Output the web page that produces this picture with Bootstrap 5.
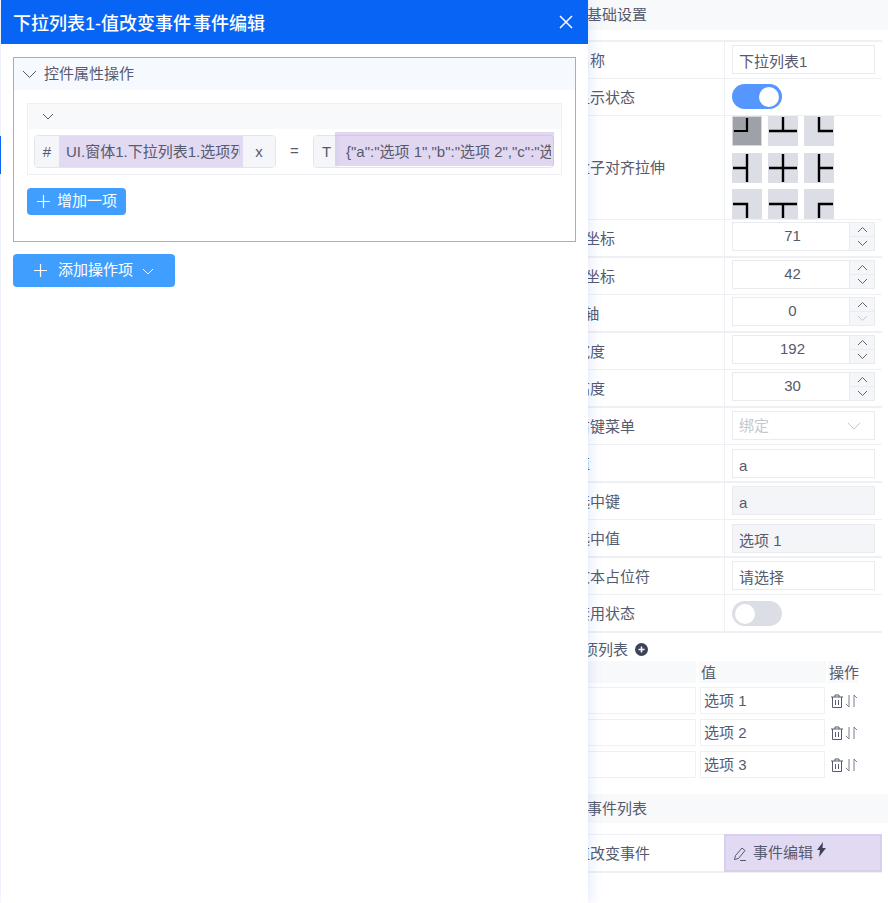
<!DOCTYPE html>
<html lang="zh">
<head>
<meta charset="utf-8">
<title>事件编辑</title>
<link href="https://cdn.jsdelivr.net/npm/bootstrap@5.3.0/dist/css/bootstrap.min.css" rel="stylesheet">
<style>
html,body{margin:0;height:903px;overflow:hidden;background:#fff}
body{font-family:"Liberation Sans","Noto Sans CJK SC",sans-serif;font-size:15px;color:#555a6e;position:relative}
.edge-mark{position:absolute;left:0;top:136px;width:1px;height:38px;background:#0764f5}
.prop-panel{margin-left:auto;width:348px}
.sec-head{height:30px;background:#f8f9fa;padding-left:47px;line-height:30px}
.prop-table{margin:10px 6px 0 0;border-top:2px solid #eff0f3}
.prop-row{display:flex;height:37px;border-bottom:1px solid #eff0f3;align-items:center}
.prop-row.thick{height:38px;border-bottom-width:2px}
.prop-row.tall{height:104px}
.prop-label{width:184px;flex:none;padding:2px 0 0 35px;white-space:nowrap}
.prop-val{flex:1;height:100%;border-left:1px solid #eff0f3;padding:0 7px;display:flex;align-items:flex-start}
.fake-input{width:143px;height:29px;margin-top:3px;border:1px solid #e9ebef;padding:3px 6px 0;line-height:26px;background:#fff}
.thick .fake-input{margin-top:4px}
.fake-input.ro{background:#f4f5f9}
.fake-input.muted{color:#c4c7d0;display:flex;justify-content:space-between;align-items:center;padding:0 13px 0 6px}
.num-wrap{width:143px;height:29px;margin-top:2px;border:1px solid #e9ebef;display:flex}
.num-val{flex:1;text-align:center;line-height:25px;padding-left:3px}
.num-btns{width:25px;border-left:1px solid #e9ebef;background:#f5f6fa;display:flex;flex-direction:column}
.num-btns span{flex:1;display:flex;align-items:center;justify-content:center;height:50%}
.num-btns span+span{border-top:1px solid #e9ebef}
.sw{width:50px;height:25px;margin-top:5px;border-radius:13px;background:#5596ff;display:flex;align-items:center;justify-content:flex-end;padding:0 3px}
.sw.off{background:#dcdee6;justify-content:flex-start;margin-top:6px}
.sw i{display:block;width:20px;height:20px;border-radius:50%;background:#fff}
.align-grid{display:grid;grid-template-columns:repeat(3,30px);gap:6.5px 6px;height:103px;overflow:hidden;align-content:start}
.align-cell{width:30px;height:30px;background:#dcdee6;display:block}
.align-cell.on{background:#9fa1a8;border:1px solid #d6d8de}
.opt-title{height:28px;padding:5px 0 0 28px;display:flex;align-items:center;gap:7px;white-space:nowrap}
.opt-title span{padding-top:2px}
.opt-head{display:flex;height:22px;line-height:22px}
.opt-head div{background:#f8f9fa;padding-top:1px;white-space:nowrap}
.c1{width:156px;flex:none}
.opt-head .c2{width:127px;flex:none;margin-left:3px;padding-left:2px}
.opt-head .c3{width:30px;flex:none;margin-left:2px;padding-left:1px}
.opt-row{display:flex;gap:4px;height:27px;margin-top:5px}
.first-opt{margin-top:4px}
.opt-cell{border:1px solid #eff0f3;height:27px;line-height:25px;padding-left:3px}
.opt-row .c2{width:125px;flex:none;padding-left:3px}
.opt-ops{display:flex;align-items:center;gap:2px;padding-left:2px}
.ev-head{margin-top:16px;height:29px;line-height:29px;background:#f8f9fa;padding-left:47px}
.ev-row{display:flex;height:39px;margin:11px 6px 0 0;border-top:1px solid #eff0f3;border-bottom:2px solid #eff0f3;align-items:center}
.ev-name{width:184px;flex:none;padding:2px 0 0 35px;white-space:nowrap}
.ev-edit{flex:1;align-self:stretch;margin:-1px 0;background:#e2d9f3;border:2px solid #d9cfec;display:flex;align-items:center;padding-left:7px;gap:6px}
.ev-edit svg.bolt{margin:-8px 0 0 -2px}
.side-drawer{position:absolute;left:1px;top:0;width:587px;height:903px;background:#fff;box-shadow:0 0 14px rgba(70,110,230,.2)}
.drawer-top{height:44px;background:#0764f5;color:#fff;font-size:18px;font-weight:500;word-spacing:-3px;line-height:44px;padding:4px 15px 0 12px;display:flex;justify-content:space-between;align-items:center}
.drawer-top svg{margin-top:-4px}
.drawer-body{padding:13px 12px}
.act-box{border:1px solid #d9a272;height:185px}
.act-box-head{height:32px;background:#f6f9fe;display:flex;align-items:center;padding:1px 0 0 8px;gap:7px}
.inner-box{margin:13px 13px 0;height:72px;border:1px solid #eff0f3}
.inner-head{height:25px;background:#f8f9fa;padding-left:14px;display:flex;align-items:center}
.expr-row{display:flex;align-items:center;padding:6px 0 0 6px;position:relative}
.expr-group{display:flex;height:33px;width:242px;border:1px solid #e3e5ec;border-radius:4px;overflow:hidden;line-height:31px}
.addon{background:#f5f6fa;text-align:center;flex:none}
.expr-main{background:#e2d9f3;flex:1;padding-left:7px;overflow:hidden;white-space:nowrap;border-right:3px solid #e2d9f3}
.eq{width:37px;text-align:center;flex:none}
.expr-group.wide{width:241px}
.expr-overlay{position:absolute;left:307px;top:3px;width:219px;height:34px;background:rgba(183,160,222,.42)}
.expr-overlay-text{position:absolute;left:318px;top:7px;width:205px;height:31px;line-height:31px;overflow:hidden;white-space:nowrap}
.blue-btn{background:#409eff;border:0;color:#fff;border-radius:4px;display:inline-flex;align-items:center;font-size:15px}
.btn-add{margin:13px 0 0 13px;width:99px;height:27px;padding:0 0 0 10px;gap:7px}
.btn-op{margin-top:12px;width:162px;height:33px;padding:0 0 0 21px;gap:11px;display:flex}
.btn-op .caret-ico{margin:2px 0 0 -2px}
</style>
</head>
<body>
<div class="edge-mark"></div>

<div class="prop-panel">
  <div class="sec-head">基础设置</div>
  <div class="prop-table">
    <div class="prop-row"><div class="prop-label">名称</div><div class="prop-val"><div class="fake-input">下拉列表1</div></div></div>
    <div class="prop-row"><div class="prop-label">显示状态</div><div class="prop-val"><div class="sw"><i></i></div></div></div>
    <div class="prop-row tall"><div class="prop-label">盒子对齐拉伸</div><div class="prop-val">
      <div class="align-grid">
        <svg class="align-cell on" viewBox="0 0 30 30"><path d="M1 15H15V1" fill="none" stroke="#000" stroke-width="2.4"/></svg>
        <svg class="align-cell" viewBox="0 0 30 30"><path d="M1 15H29M15 15V1" fill="none" stroke="#000" stroke-width="2.4"/></svg>
        <svg class="align-cell" viewBox="0 0 30 30"><path d="M15 1V15H29" fill="none" stroke="#000" stroke-width="2.4"/></svg>
        <svg class="align-cell" viewBox="0 0 30 30"><path d="M1 15H15M15 1V29" fill="none" stroke="#000" stroke-width="2.4"/></svg>
        <svg class="align-cell" viewBox="0 0 30 30"><path d="M1 15H29M15 1V29" fill="none" stroke="#000" stroke-width="2.4"/></svg>
        <svg class="align-cell" viewBox="0 0 30 30"><path d="M29 15H15M15 1V29" fill="none" stroke="#000" stroke-width="2.4"/></svg>
        <svg class="align-cell" viewBox="0 0 30 30"><path d="M1 15H15V29" fill="none" stroke="#000" stroke-width="2.4"/></svg>
        <svg class="align-cell" viewBox="0 0 30 30"><path d="M1 15H29M15 15V29" fill="none" stroke="#000" stroke-width="2.4"/></svg>
        <svg class="align-cell" viewBox="0 0 30 30"><path d="M29 15H15V29" fill="none" stroke="#000" stroke-width="2.4"/></svg>
      </div></div></div>
    <div class="prop-row thick"><div class="prop-label">X坐标</div><div class="prop-val"><div class="num-wrap"><div class="num-val">71</div><div class="num-btns"><span><svg width="11" height="7" viewBox="0 0 11 7"><path d="M1 6L5.5 1.5 10 6" fill="none" stroke="#666"/></svg></span><span><svg width="11" height="7" viewBox="0 0 11 7"><path d="M1 1L5.5 5.5 10 1" fill="none" stroke="#666"/></svg></span></div></div></div></div>
    <div class="prop-row"><div class="prop-label">Y坐标</div><div class="prop-val"><div class="num-wrap"><div class="num-val">42</div><div class="num-btns"><span><svg width="11" height="7" viewBox="0 0 11 7"><path d="M1 6L5.5 1.5 10 6" fill="none" stroke="#666"/></svg></span><span><svg width="11" height="7" viewBox="0 0 11 7"><path d="M1 1L5.5 5.5 10 1" fill="none" stroke="#666"/></svg></span></div></div></div></div>
    <div class="prop-row thick"><div class="prop-label">Z轴</div><div class="prop-val"><div class="num-wrap"><div class="num-val">0</div><div class="num-btns"><span><svg width="11" height="7" viewBox="0 0 11 7"><path d="M1 6L5.5 1.5 10 6" fill="none" stroke="#666"/></svg></span><span><svg width="11" height="7" viewBox="0 0 11 7"><path d="M1 1L5.5 5.5 10 1" fill="none" stroke="#c4c7d0"/></svg></span></div></div></div></div>
    <div class="prop-row"><div class="prop-label">宽度</div><div class="prop-val"><div class="num-wrap"><div class="num-val">192</div><div class="num-btns"><span><svg width="11" height="7" viewBox="0 0 11 7"><path d="M1 6L5.5 1.5 10 6" fill="none" stroke="#666"/></svg></span><span><svg width="11" height="7" viewBox="0 0 11 7"><path d="M1 1L5.5 5.5 10 1" fill="none" stroke="#666"/></svg></span></div></div></div></div>
    <div class="prop-row thick"><div class="prop-label">高度</div><div class="prop-val"><div class="num-wrap"><div class="num-val">30</div><div class="num-btns"><span><svg width="11" height="7" viewBox="0 0 11 7"><path d="M1 6L5.5 1.5 10 6" fill="none" stroke="#666"/></svg></span><span><svg width="11" height="7" viewBox="0 0 11 7"><path d="M1 1L5.5 5.5 10 1" fill="none" stroke="#666"/></svg></span></div></div></div></div>
    <div class="prop-row"><div class="prop-label">右键菜单</div><div class="prop-val"><div class="fake-input muted">绑定<svg width="14" height="8" viewBox="0 0 14 8"><path d="M1 1L7 7 13 1" fill="none" stroke="#c4c7d0"/></svg></div></div></div>
    <div class="prop-row thick"><div class="prop-label">值</div><div class="prop-val"><div class="fake-input">a</div></div></div>
    <div class="prop-row"><div class="prop-label">选中键</div><div class="prop-val"><div class="fake-input ro">a</div></div></div>
    <div class="prop-row thick"><div class="prop-label">选中值</div><div class="prop-val"><div class="fake-input ro">选项 1</div></div></div>
    <div class="prop-row"><div class="prop-label">文本占位符</div><div class="prop-val"><div class="fake-input">请选择</div></div></div>
    <div class="prop-row thick"><div class="prop-label">禁用状态</div><div class="prop-val"><div class="sw off"><i></i></div></div></div>
  </div>
  <div class="opt-title"><span>选项列表</span><svg width="13" height="13" viewBox="0 0 13 13"><circle cx="6.5" cy="6.5" r="6.5" fill="#3c4358"/><path d="M6.5 3.5v6M3.5 6.5h6" stroke="#fff" stroke-width="1.5"/></svg></div>
  <div class="opt-head"><div class="c1">键</div><div class="c2">值</div><div class="c3">操作</div></div>
  <div class="opt-row first-opt"><div class="c1 opt-cell">a</div><div class="c2 opt-cell">选项 1</div><div class="opt-ops"><svg width="12" height="14" viewBox="0 0 12 14"><path d="M0 3h12M4 3V1h4v2M1.5 3v10.5h9V3M4.5 6v5M7.5 6v5" fill="none" stroke="#555a6e"/></svg><svg width="13" height="14" viewBox="0 0 13 14"><path d="M4 1v12M1 10l3 3M9 13V1M9 1l3 3" fill="none" stroke="#7a7f90"/></svg></div></div>
  <div class="opt-row"><div class="c1 opt-cell">b</div><div class="c2 opt-cell">选项 2</div><div class="opt-ops"><svg width="12" height="14" viewBox="0 0 12 14"><path d="M0 3h12M4 3V1h4v2M1.5 3v10.5h9V3M4.5 6v5M7.5 6v5" fill="none" stroke="#555a6e"/></svg><svg width="13" height="14" viewBox="0 0 13 14"><path d="M4 1v12M1 10l3 3M9 13V1M9 1l3 3" fill="none" stroke="#7a7f90"/></svg></div></div>
  <div class="opt-row"><div class="c1 opt-cell">c</div><div class="c2 opt-cell">选项 3</div><div class="opt-ops"><svg width="12" height="14" viewBox="0 0 12 14"><path d="M0 3h12M4 3V1h4v2M1.5 3v10.5h9V3M4.5 6v5M7.5 6v5" fill="none" stroke="#555a6e"/></svg><svg width="13" height="14" viewBox="0 0 13 14"><path d="M4 1v12M1 10l3 3M9 13V1M9 1l3 3" fill="none" stroke="#7a7f90"/></svg></div></div>
  <div class="ev-head">事件列表</div>
  <div class="ev-row"><div class="ev-name">值改变事件</div>
    <div class="ev-edit"><svg width="14" height="15" viewBox="0 0 14 15"><path d="M1.5 13.5l1-4L9 2l3 2.5-6.5 8zM7 14.5h6" fill="none" stroke="#555a6e"/></svg><span>事件编辑</span><svg class="bolt" width="9" height="15" viewBox="0 0 9 15"><path d="M6 0L0 8h3l-1 7 7-9H5.5z" fill="#3c4358"/></svg></div>
  </div>
</div>

<div class="side-drawer">
  <div class="drawer-top"><span>下拉列表1-值改变事件 事件编辑</span><svg width="14" height="14" viewBox="0 0 14 14"><path d="M1 1l12 12M13 1L1 13" stroke="#fff" stroke-width="1.5"/></svg></div>
  <div class="drawer-body">
    <div class="act-box">
      <div class="act-box-head"><svg width="15" height="9" viewBox="0 0 15 9"><path d="M1 1l6.5 6.5L14 1" fill="none" stroke="#555a6e"/></svg><span>控件属性操作</span></div>
      <div class="inner-box">
        <div class="inner-head"><svg width="12" height="7" viewBox="0 0 12 7"><path d="M1 1l5 5 5-5" fill="none" stroke="#555a6e"/></svg></div>
        <div class="expr-row">
          <div class="expr-group"><div class="addon" style="width:24px">#</div><div class="expr-main">UI.窗体1.下拉列表1.选项列表</div><div class="addon" style="width:32px">x</div></div>
          <div class="eq">=</div>
          <div class="expr-group wide"><div class="addon" style="width:25px">T</div></div>
          <div class="expr-overlay"></div>
          <div class="expr-overlay-text">{"a":"选项 1","b":"选项 2","c":"选项 3"}</div>
        </div>
      </div>
      <button type="button" class="blue-btn btn-add"><svg width="13" height="13" viewBox="0 0 13 13"><path d="M6.5 0v13M0 6.5h13" stroke="#fff" stroke-width="1.2"/></svg>增加一项</button>
    </div>
    <button type="button" class="blue-btn btn-op"><svg width="13" height="13" viewBox="0 0 13 13"><path d="M6.5 0v13M0 6.5h13" stroke="#fff" stroke-width="1.2"/></svg><span>添加操作项</span><svg class="caret-ico" width="12" height="7" viewBox="0 0 12 7"><path d="M1 1l5 5 5-5" fill="none" stroke="#fff"/></svg></button>
  </div>
</div>
<script src="https://cdn.jsdelivr.net/npm/bootstrap@5.3.0/dist/js/bootstrap.bundle.min.js"></script>
</body>
</html>
